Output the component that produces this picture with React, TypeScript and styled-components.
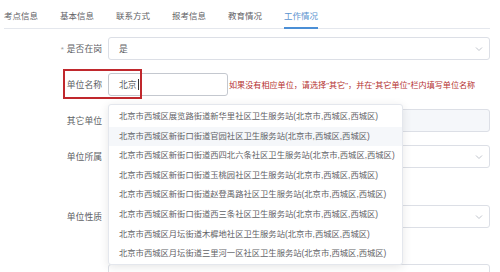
import React from "react";
import styled, { createGlobalStyle } from "styled-components";

const GlobalStyle = createGlobalStyle`
  html, body { margin: 0; padding: 0; background: #ffffff; }
  body {
    width: 500px;
    height: 272px;
    overflow: hidden;
    font-family: "Liberation Sans", "Noto Sans CJK SC", sans-serif;
    color: #606266;
  }
`;

const Page = styled.div`
  width: 500px;
  height: 272px;
  position: relative;
  overflow: hidden;
`;

const TabBar = styled.div`
  display: flex;
  gap: 22px;
  height: 29px;
  margin: 0 10px 0 4px;
  border-bottom: 1px solid #e4e7ed;
  box-sizing: border-box;
`;

const Tab = styled.div<{ $active?: boolean }>`
  position: relative;
  font-size: 8.5px;
  line-height: 29px;
  height: 28px;
  padding-top: 2px;
  box-sizing: border-box;
  color: ${(p) => (p.$active ? "#5a93cf" : "#5f6266")};
  &::after {
    content: "";
    display: ${(p) => (p.$active ? "block" : "none")};
    position: absolute;
    left: 0;
    right: 0;
    bottom: -1px;
    height: 2px;
    background: #4b8fd6;
  }
`;

const Form = styled.div`
  display: flex;
  flex-direction: column;
  padding-top: 8px;
  width: 490px;
`;

const Row = styled.div<{ $gap?: number }>`
  position: relative;
  display: grid;
  grid-template-columns: 108px 1fr;
  align-items: center;
  height: 23px;
  margin-bottom: ${(p) => p.$gap ?? 13}px;
`;

const Label = styled.div`
  text-align: right;
  padding-right: 6px;
  font-size: 8.8px;
  color: #606266;
  white-space: nowrap;
`;

const Star = styled.span`
  color: #a0a0a0;
  margin-right: 3px;
  font-size: 8px;
`;

const Box = styled.div<{ $disabled?: boolean }>`
  position: relative;
  height: 23px;
  box-sizing: border-box;
  border: 1px solid #dcdfe6;
  border-radius: 3px;
  background: ${(p) => (p.$disabled ? "#f5f7fa" : "#ffffff")};
  display: flex;
  align-items: center;
  padding-left: 10px;
  font-size: 8.8px;
  color: #606266;
`;

const Chevron = styled.svg`
  position: absolute;
  right: 6px;
  top: 50%;
  margin-top: -3px;
`;

const Inline = styled.div`
  display: flex;
  align-items: center;
  gap: 1px;
`;

const SmallInput = styled(Box)`
  width: 120px;
  border-color: #c4c8cf;
`;

const Caret = styled.span`
  display: inline-block;
  width: 1px;
  height: 11px;
  background: #333;
  margin-left: 1px;
`;

const Hint = styled.div`
  font-size: 8.1px;
  color: #b5312f;
  white-space: nowrap;
`;

const Highlight = styled.div`
  position: absolute;
  left: 63px;
  top: -4px;
  width: 79px;
  height: 30px;
  box-sizing: border-box;
  border: 2px solid #c0282d;
  pointer-events: none;
`;

const Anchor = styled.div`
  position: relative;
`;

const Dropdown = styled.ul`
  position: absolute;
  top: 31px;
  left: 0;
  width: 295px;
  margin: 0;
  padding: 2px 0 0;
  list-style: none;
  background: #ffffff;
  border: 1px solid #e4e7ed;
  border-radius: 3px;
  box-shadow: 0 2px 10px rgba(0, 0, 0, 0.1);
  z-index: 10;
  box-sizing: border-box;
`;

const Item = styled.li<{ $hover?: boolean }>`
  height: 19.6px;
  line-height: 19.6px;
  padding-left: 10px;
  font-size: 8.3px;
  color: #5f6266;
  white-space: nowrap;
  background: ${(p) => (p.$hover ? "#f5f7fa" : "transparent")};
`;

const ChevronIcon = () => (
  <Chevron width="8" height="6" viewBox="0 0 8 6">
    <path d="M1 1.5 L4 4.5 L7 1.5" fill="none" stroke="#c0c4cc" strokeWidth="1" />
  </Chevron>
);

const items = [
  "北京市西城区展览路街道新华里社区卫生服务站(北京市,西城区,西城区)",
  "北京市西城区新街口街道官园社区卫生服务站(北京市,西城区,西城区)",
  "北京市西城区新街口街道西四北六条社区卫生服务站(北京市,西城区,西城区)",
  "北京市西城区新街口街道玉桃园社区卫生服务站(北京市,西城区,西城区)",
  "北京市西城区新街口街道赵登禹路社区卫生服务站(北京市,西城区,西城区)",
  "北京市西城区新街口街道西三条社区卫生服务站(北京市,西城区,西城区)",
  "北京市西城区月坛街道木樨地社区卫生服务站(北京市,西城区,西城区)",
  "北京市西城区月坛街道三里河一区社区卫生服务站(北京市,西城区,西城区)",
];

export default function App() {
  return (
    <Page>
      <GlobalStyle />
      <TabBar>
        <Tab>考点信息</Tab>
        <Tab>基本信息</Tab>
        <Tab>联系方式</Tab>
        <Tab>报考信息</Tab>
        <Tab>教育情况</Tab>
        <Tab $active>工作情况</Tab>
      </TabBar>
      <Form>
        <Row>
          <Label>
            <Star>*</Star>是否在岗
          </Label>
          <Box>
            是
            <ChevronIcon />
          </Box>
        </Row>
        <Row>
          <Label>单位名称</Label>
          <Inline>
            <Anchor>
              <SmallInput>
                北京
                <Caret />
              </SmallInput>
              <Dropdown>
                {items.map((t, i) => (
                  <Item key={i} $hover={i === 1}>
                    {t}
                  </Item>
                ))}
              </Dropdown>
            </Anchor>
            <Hint>如果没有相应单位，请选择"其它"，并在"其它单位"栏内填写单位名称</Hint>
          </Inline>
          <Highlight />
        </Row>
        <Row>
          <Label>其它单位</Label>
          <Box $disabled />
        </Row>
        <Row $gap={37}>
          <Label>单位所属</Label>
          <Box>
            <ChevronIcon />
          </Box>
        </Row>
        <Row $gap={36}>
          <Label>单位性质</Label>
          <Box>
            <ChevronIcon />
          </Box>
        </Row>
        <Row>
          <Label></Label>
          <Box />
        </Row>
      </Form>
    </Page>
  );
}
